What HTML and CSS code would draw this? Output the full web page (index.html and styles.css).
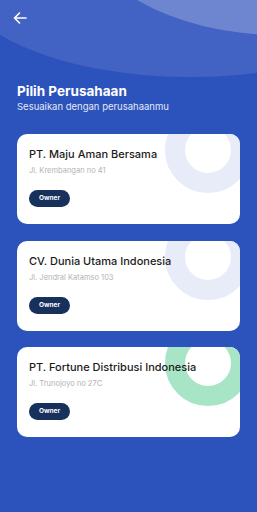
FILE: index.html
```html
<!DOCTYPE html>
<html>
<head>
    <meta name="viewport" content="width=device-width, initial-scale=1.0">
    <title>Pilih Perusahaan</title>
    <link rel="stylesheet" href="styles.css">
</head>
<body>
    <div class="screen">
        <div class="glow glow-outer"></div>
        <div class="glow glow-inner"></div>

        <div class="content">
            <button class="back-button" aria-label="Kembali">
                <svg width="14" height="12" viewBox="0 0 14 12">
                    <path d="M13 6H1.5M6.5 1L1.5 6l5 5" fill="none" stroke="#fff" stroke-width="1.6" stroke-linecap="round" stroke-linejoin="round"/>
                </svg>
            </button>

            <div class="heading">
                <h1>Pilih Perusahaan</h1>
                <p>Sesuaikan dengan perusahaanmu</p>
            </div>

            <div class="company-list">
                <div class="company-card">
                    <div class="ring"></div>
                    <h2>PT. Maju Aman Bersama</h2>
                    <div class="address">Jl. Krembangan no 41</div>
                    <span class="role">Owner</span>
                </div>
                <div class="company-card">
                    <div class="ring"></div>
                    <h2>CV. Dunia Utama Indonesia</h2>
                    <div class="address">Jl. Jendral Katamso 103</div>
                    <span class="role">Owner</span>
                </div>
                <div class="company-card">
                    <div class="ring ring-green"></div>
                    <h2>PT. Fortune Distribusi Indonesia</h2>
                    <div class="address">Jl. Trunojoyo no 27C</div>
                    <span class="role">Owner</span>
                </div>
            </div>
        </div>
    </div>
</body>
</html>
```

FILE: styles.css
```css
body {
    margin: 0;
    background-color: #2c52bb;
    font-family: Inter, "Open Sans", sans-serif;
}

.screen {
    position: relative;
    width: 257px;
    height: 512px;
    overflow: hidden;
    background-color: #2c52bb;
}

/* Background decoration */
.glow {
    position: absolute;
    border-radius: 50%;
}

.glow-outer {
    left: -40px;
    top: -117px;
    width: 460px;
    height: 194px;
    background-color: #4262c4;
}

.glow-inner {
    left: 81px;
    top: -195px;
    width: 398px;
    height: 230px;
    background-color: #6d86cf;
}

.content {
    position: relative;
    padding: 12px 17px 0;
}

.back-button {
    display: block;
    margin-left: -4px;
    padding: 0;
    width: 14px;
    height: 12px;
    border: none;
    background: none;
}

.back-button svg {
    display: block;
}

.heading {
    margin-top: 59px;
}

.heading h1 {
    margin: 0;
    font-size: 13.5px;
    line-height: 16px;
    font-weight: 700;
    color: #fff;
}

.heading p {
    margin: 2px 0 0;
    font-size: 9.5px;
    line-height: 12px;
    color: #e3e9f8;
}

/* Cards */
.company-list {
    display: flex;
    flex-direction: column;
    gap: 16.5px;
    margin-top: 21px;
}

.company-card {
    position: relative;
    overflow: hidden;
    height: 90px;
    box-sizing: border-box;
    padding: 13px 12px 0;
    border-radius: 10px;
    background-color: #fff;
}

.ring {
    position: absolute;
    left: 148px;
    top: -27px;
    width: 46px;
    height: 46px;
    border: 20px solid #e8ecf8;
    border-radius: 50%;
}

.ring-green {
    border-color: #a7e5c6;
}

.company-card h2 {
    position: relative;
    margin: 0;
    font-size: 11px;
    line-height: 14px;
    font-weight: 500;
    color: #1b1b1b;
}

.address {
    position: relative;
    margin-top: 4px;
    font-size: 7.5px;
    line-height: 12px;
    color: #b3b3b3;
}

.role {
    position: relative;
    display: inline-block;
    margin-top: 13px;
    width: 41px;
    height: 17px;
    border-radius: 9px;
    background-color: #17305c;
    color: #fff;
    font-size: 6.5px;
    font-weight: 700;
    line-height: 17px;
    text-align: center;
}
```
